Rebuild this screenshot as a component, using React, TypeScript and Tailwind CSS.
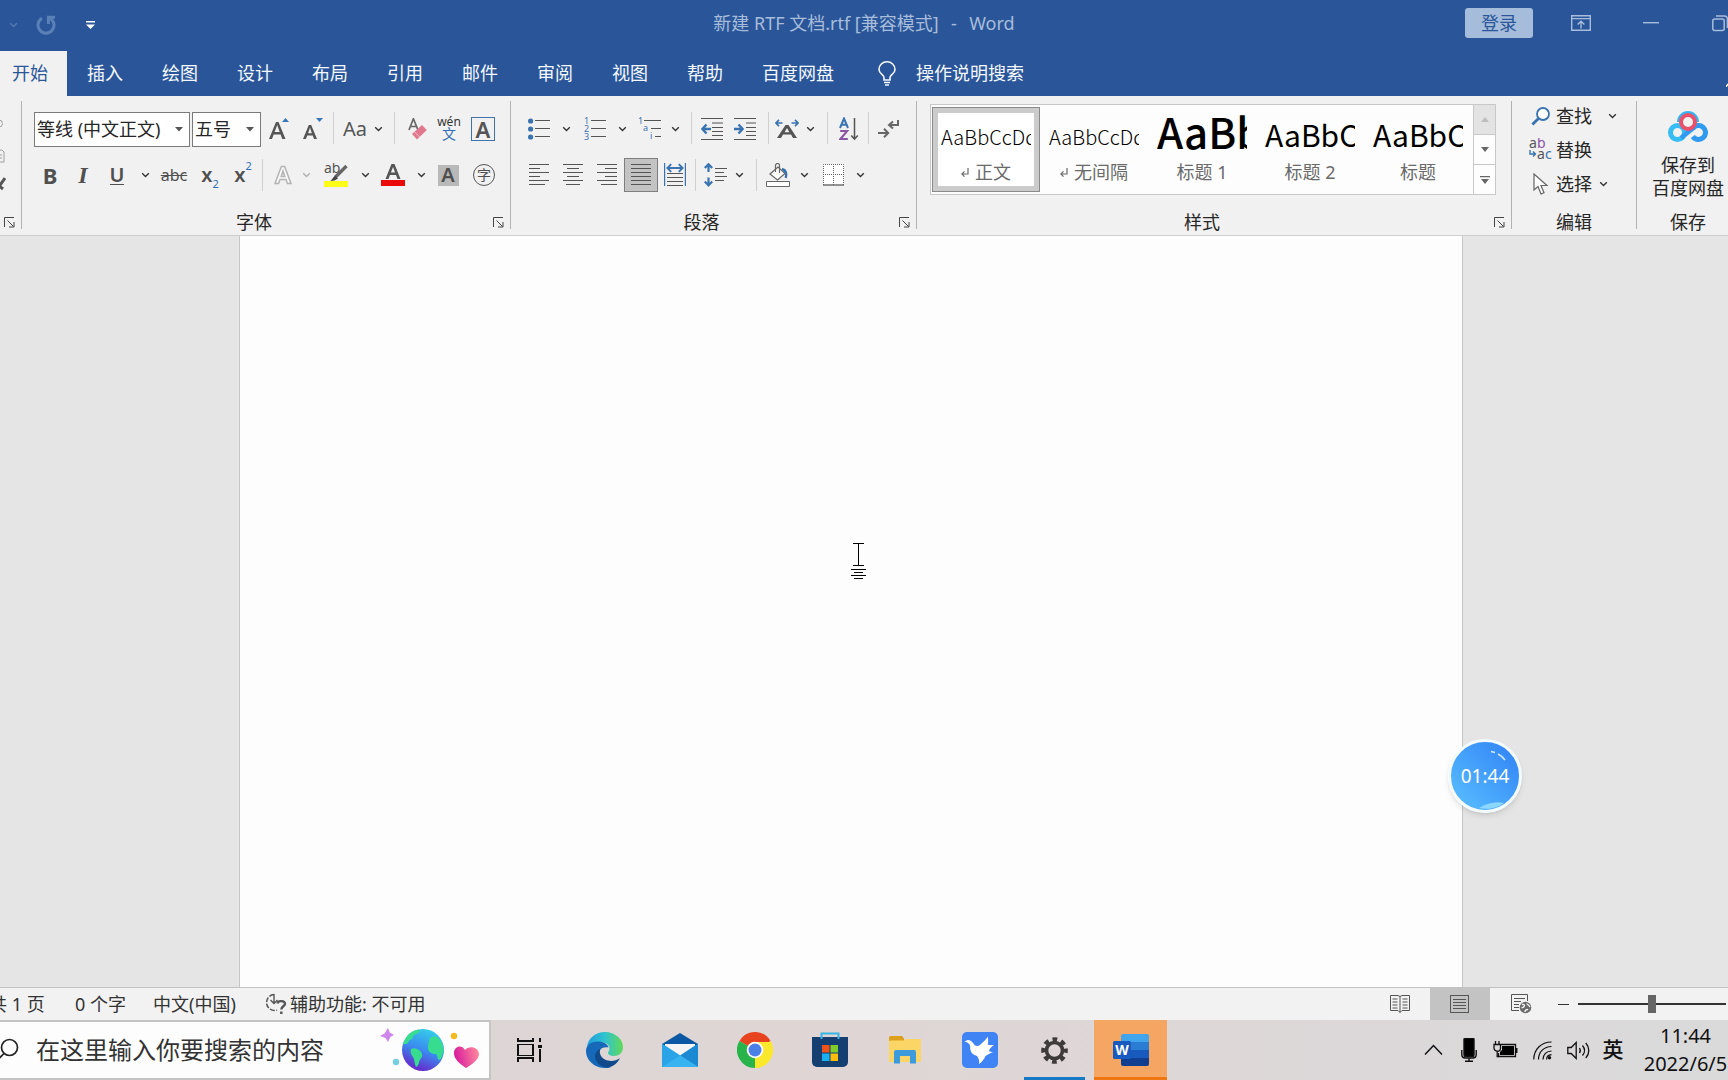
import { useState } from "react";
import type { ReactNode } from "react";

const tabs = ["插入", "绘图", "设计", "布局", "引用", "邮件", "审阅", "视图", "帮助", "百度网盘"];

const styles = [
  { name: "正文", sample: "AaBbCcDd", mark: true, look: "text-[20px] font-light" },
  { name: "无间隔", sample: "AaBbCcDd", mark: true, look: "text-[20px] font-light" },
  { name: "标题 1", sample: "AaBb", mark: false, look: "pb-3 text-[42px] font-medium" },
  { name: "标题 2", sample: "AaBbC", mark: false, look: "pb-1 text-[30px]" },
  { name: "标题", sample: "AaBbC", mark: false, look: "pb-1 text-[30px]" },
];

/* ---------- small parts ---------- */

function Chevron({ className = "text-[#333]" }: { className?: string }) {
  return (
    <svg width="9" height="6" viewBox="0 0 9 6" fill="none" stroke="currentColor" strokeWidth="1.4" className={className}>
      <path d="M1.2 1.2 4.5 4.4 7.8 1.2" />
    </svg>
  );
}

function Btn({ w, label, children, className = "" }: { w: string; label: string; children: ReactNode; className?: string }) {
  return (
    <button aria-label={label} title={label} className={`flex h-[34px] shrink-0 items-center justify-center ${w} ${className}`}>
      {children}
    </button>
  );
}

function Sep({ w }: { w: string }) {
  return (
    <span className={`flex h-8 shrink-0 justify-center ${w}`}>
      <span className="w-px bg-[#d0d0d0]" />
    </span>
  );
}

function Launcher({ label }: { label: string }) {
  return (
    <button aria-label={label} className="flex w-6 shrink-0 items-center justify-center">
      <svg width="11" height="11" viewBox="0 0 11 11" fill="none" stroke="#444">
        <path d="M.5 10V.5H10M3.5 3.5l6 6M10 5v5H5" />
      </svg>
    </button>
  );
}

function Group({ w, title, launcher, children }: { w: string; title: string; launcher?: boolean; children: ReactNode }) {
  return (
    <section className={`flex shrink-0 flex-col ${w}`}>
      <div className="flex-1">{children}</div>
      <div className="flex h-[26px] items-center">
        <span className="flex-1 text-center leading-6">{title}</span>
        {launcher && <Launcher label={`${title}设置`} />}
      </div>
    </section>
  );
}

function Divider() {
  return <div className="mt-[5px] mb-[6px] w-px shrink-0 bg-[#b3b3b3]" />;
}

function Combo({ w, label, value }: { w: string; label: string; value: string }) {
  return (
    <div className={`flex h-[35px] shrink-0 items-center border border-[#7a7a7a] bg-white pr-[6px] ${w}`}>
      <select aria-label={label} className="min-w-0 flex-1 appearance-none bg-transparent pl-[2px] text-[#262626] outline-none">
        <option>{value}</option>
      </select>
      <svg width="8" height="5" viewBox="0 0 8 5" fill="#555">
        <path d="M0 0h8L4 4.6z" />
      </svg>
    </div>
  );
}

function Lines({ rows }: { rows: number[][] }) {
  return (
    <svg width="22" height="22" viewBox="0 0 22 22" stroke="#555" shapeRendering="crispEdges">
      {rows.map(([a, b], i) => (
        <path key={i} d={`M${a} ${i * 4 + 0.5}H${b}`} />
      ))}
    </svg>
  );
}

/* ---------- title bar and tabs ---------- */

function TitleBar() {
  return (
    <header className="grid h-[51px] shrink-0 grid-cols-[1fr_auto_1fr] text-[#a7bddb]">
      <div className="flex h-[50px] items-center pl-[9px]">
        <Chevron className="text-[#5479b3]" />
        <button aria-label="重复" className="ml-[18px]">
          <svg width="20" height="20" viewBox="0 0 20 20" fill="none" stroke="#5a80b8" strokeWidth="3">
            <path d="M6 3.2A8 8 0 1 0 14 3.2" />
            <path d="M12.400 9V2.200H19" />
          </svg>
        </button>
        <button aria-label="自定义快速访问工具栏" className="ml-[30px]">
          <svg width="9" height="8" viewBox="0 0 9 8" fill="#fff">
            <path d="M0 0h9v1.600H0zM0 3.400h9L4.500 8z" />
          </svg>
        </button>
      </div>
      <h1 className="self-start pt-[11px] leading-6 whitespace-pre">
        新建 RTF 文档.rtf [兼容模式]  <span className="px-[3px]">-</span>  Word
      </h1>
      <div className="flex h-[46px] items-center justify-end">
        <button className="h-[30px] w-[68px] rounded-[3px] bg-[#a5bcda] text-[#2b579a]">登录</button>
        <button aria-label="功能区显示选项" className="ml-[38px]">
          <svg width="20" height="16" viewBox="0 0 20 16" fill="none" stroke="currentColor" strokeWidth="1.4">
            <path d="M.7.7h18.600v14.600H.7zM.7 3.600h18.600M10 13.600V6.400M6.600 9.600 10 6.200l3.400 3.400" />
          </svg>
        </button>
        <button aria-label="最小化" className="ml-[52px]">
          <svg width="16" height="4" viewBox="0 0 16 4" fill="currentColor">
            <path d="M0 1h16v1.400H0z" />
          </svg>
        </button>
        <button aria-label="还原" className="ml-[53px]">
          <svg width="16" height="17" viewBox="0 0 16 17" fill="none" stroke="currentColor" strokeWidth="1.5">
            <rect x=".8" y="4" width="11.400" height="11.600" rx="2" />
            <path d="M4 1h8.400a3 3 0 0 1 3 3v9" />
          </svg>
        </button>
      </div>
    </header>
  );
}

function TabBar() {
  return (
    <nav className="flex h-[45px] shrink-0 items-stretch gap-px text-[#f4f8ff]">
      <button className="bg-[#f1f1f1] pr-[19px] pl-3 text-[#2b579a]">开始</button>
      {tabs.map((t) => (
        <button key={t} className="shrink-0 px-[19px]">
          {t}
        </button>
      ))}
      <button className="ml-6 flex shrink-0 items-center gap-5">
        <svg width="18" height="25" viewBox="0 0 18 25" fill="none" stroke="currentColor" strokeWidth="1.6">
          <path d="M6 19v-2.500C6 13.500 1 13 1 8.400a8 7.600 0 0 1 16 0C17 13 12 13.500 12 16.500V19zM6 21.500h6M7 24h4" />
        </svg>
        操作说明搜索
      </button>
      <button aria-label="折叠功能区" className="ml-auto flex items-end pb-[9px]">
        <svg width="2" height="4" viewBox="0 0 2 4" stroke="#fff" strokeWidth="1.4">
          <path d="M0 4 2 1" />
        </svg>
      </button>
    </nav>
  );
}

/* ---------- ribbon ---------- */

function ClipboardStub() {
  return (
    <div className="flex w-[21px] shrink-0 flex-col">
      <svg width="6" height="90" viewBox="0 0 6 90" fill="none" stroke="#a0a0a0" className="mt-4">
        <circle cx="-1" cy="11.500" r="3.500" />
        <path d="M0 38h2l2 2v10H0M0 43h2M0 46h2" />
        <path d="M-2 76 5 66M-2 73l5 4" stroke="#555" strokeWidth="3" />
      </svg>
      <div className="mt-auto flex h-[26px] justify-end">
        <Launcher label="剪贴板设置" />
      </div>
    </div>
  );
}

function FontGroup() {
  return (
    <Group w="w-[488px]" title="字体" launcher>
      <div className="mt-4 flex h-[35px] items-start pl-3 text-[#555]">
        <Combo w="w-[156px]" label="字体" value="等线 (中文正文)" />
        <span className="w-[2px] shrink-0" />
        <Combo w="w-[69px]" label="字号" value="五号" />
        <Btn w="w-9" label="增大字号">
          <svg width="20" height="22" viewBox="0 0 20 22">
            <path d="M0 21 7 4h2.500l7 17h-3.200l-1.700-4.500H4.700L3 21zM5.600 14h5.100L8.200 7z" fill="#555" />
            <path d="M13 4h7l-3.500-4z" fill="#3a77b8" />
          </svg>
        </Btn>
        <Btn w="w-8" label="减小字号">
          <svg width="20" height="22" viewBox="0 0 20 22">
            <path d="M0 21 5.800 7h2.400L14 21h-2.900l-1.400-3.600H4.300L2.900 21zM5.100 15.200h3.800L7 9.800z" fill="#555" />
            <path d="M13 0h7l-3.500 4z" fill="#3a77b8" />
          </svg>
        </Btn>
        <Sep w="w-[9px]" />
        <Btn w="w-[34px]" label="更改大小写" className="text-[20px]">Aa</Btn>
        <Btn w="w-3" label="大小写选项"><Chevron /></Btn>
        <Sep w="w-5" />
        <Btn w="w-7" label="清除所有格式">
          <svg width="20" height="22" viewBox="0 0 20 22">
            <path d="M1 12 5.400.800 10 12M2.400 8.500h6" fill="none" stroke="#666" strokeWidth="1.700" />
            <path d="M4 16 14 7l4.800 5L9 21.500z" fill="#e0798e" />
            <path d="m6.500 13.700 5 5.300" stroke="#f4c3cd" strokeWidth="1" />
          </svg>
        </Btn>
        <Btn w="w-[34px]" label="拼音指南">
          <span className="flex flex-col items-center">
            <span className="text-[12px] leading-[10px] text-[#333]">wén</span>
            <span className="text-[14px] leading-[14px] text-[#2f6fb5]">文</span>
          </span>
        </Btn>
        <Btn w="w-[34px]" label="字符边框">
          <span className="flex size-6 items-center justify-center border border-[#3f74a8] text-[22px] leading-5 font-semibold">A</span>
        </Btn>
      </div>
      <div className="mt-[11px] flex h-[34px] items-center pl-3 text-[#505050]">
        <Btn w="w-8" label="加粗" className="text-[22px] font-bold">B</Btn>
        <Btn w="w-[34px]" label="倾斜" className="font-['Liberation_Serif',serif] text-[24px] font-bold italic">I</Btn>
        <Btn w="w-[34px]" label="下划线">
          <span className="border-b border-[#505050] text-[20px] leading-[18px] font-semibold">U</span>
        </Btn>
        <Btn w="w-[22px]" label="下划线选项"><Chevron /></Btn>
        <Btn w="w-9" label="删除线" className="text-[16px] line-through">abc</Btn>
        <Btn w="w-9" label="下标">
          <span className="text-[20px] leading-6 font-semibold">x</span>
          <span className="self-end text-[11px] leading-4 text-[#2f6fb5]">2</span>
        </Btn>
        <Btn w="w-[30px]" label="上标">
          <span className="text-[20px] leading-6 font-semibold">x</span>
          <span className="self-start text-[11px] leading-4 text-[#2f6fb5]">2</span>
        </Btn>
        <Sep w="w-2" />
        <Btn w="w-[34px]" label="文本效果">
          <svg width="18" height="20" viewBox="0 0 18 20" fill="#fafafa" stroke="#b4b4b4" strokeWidth="1.500">
            <path d="M1 18.500 7.400 1.500h3.200L17 18.500h-3.600L12 14.600H6L4.600 18.500zM7.200 11.500h3.600L9 6z" />
          </svg>
        </Btn>
        <Btn w="w-3" label="文本效果选项"><Chevron className="text-[#b0b0b0]" /></Btn>
        <Btn w="w-12" label="突出显示">
          <svg width="24" height="25" viewBox="0 0 24 25">
            <text x="0" y="10" fontSize="14" fill="#555">ab</text>
            <path d="m22.500 3-11 11" stroke="#666" strokeWidth="3.400" />
            <path d="m11 12.500 3 3-3.500 2-4 .5z" fill="#444" />
            <path d="M0 18h24v6H0z" fill="#ffff1a" />
          </svg>
        </Btn>
        <Btn w="w-[10px]" label="突出显示颜色"><Chevron /></Btn>
        <Btn w="w-[46px]" label="字体颜色">
          <svg width="24" height="24" viewBox="0 0 24 24">
            <path d="M4.500 16 10.500 1h3l6 15h-3l-1.500-4H9l-1.500 4zM9.900 9.600h4.200L12 4z" fill="#555" />
            <path d="M0 17h24v6H0z" fill="#ea0a0a" />
          </svg>
        </Btn>
        <Btn w="w-[10px]" label="字体颜色选项"><Chevron /></Btn>
        <Btn w="w-11" label="字符底纹">
          <span className="flex size-[21px] items-center justify-center bg-[#b9b9b9] text-[20px] leading-5 font-semibold">A</span>
        </Btn>
        <Btn w="w-7" label="带圈字符">
          <span className="flex size-[22px] items-center justify-center rounded-full border border-[#555] text-[14px] leading-4">字</span>
        </Btn>
      </div>
    </Group>
  );
}

function ParagraphGroup() {
  return (
    <Group w="w-[405px]" title="段落" launcher>
      <div className="mt-4 flex h-[35px] items-start pl-[11px] text-[#555]">
        <Btn w="w-[34px]" label="项目符号">
          <svg width="22" height="22" viewBox="0 0 22 22">
            <g fill="#3a73b0">
              <circle cx="2.600" cy="3" r="2.600" />
              <circle cx="2.600" cy="11" r="2.600" />
              <circle cx="2.600" cy="19" r="2.600" />
            </g>
            <path d="M7 2.500h15M7 10.500h15M7 18.500h15" stroke="#555" />
          </svg>
        </Btn>
        <Btn w="w-5" label="项目符号库"><Chevron /></Btn>
        <Btn w="w-[38px]" label="编号">
          <svg width="22" height="24" viewBox="0 0 22 24">
            <g fill="#3a73b0" fontSize="9">
              <text x="0" y="7">1</text>
              <text x="0" y="15">2</text>
              <text x="0" y="23">3</text>
            </g>
            <path d="M7 3.500h15M7 11.500h15M7 19.500h15" stroke="#555" />
          </svg>
        </Btn>
        <Btn w="w-4" label="编号库"><Chevron /></Btn>
        <Btn w="w-[38px]" label="多级列表">
          <svg width="23" height="24" viewBox="0 0 23 24">
            <g fill="#3a73b0" fontSize="9">
              <text x="0" y="7">1</text>
              <text x="5" y="14">a</text>
              <text x="12" y="22">i</text>
            </g>
            <path d="M6 3.500h17M13 11.500h10M17 19.500h6" stroke="#555" />
          </svg>
        </Btn>
        <Btn w="w-[14px]" label="多级列表库"><Chevron /></Btn>
        <Sep w="w-[18px]" />
        <Btn w="w-6" label="减少缩进量">
          <svg width="23" height="22" viewBox="0 0 23 22" fill="none">
            <path d="M0 .5h22M11 5h11M11 9.500h11M11 13.500h11M11 17.500h11M0 21.500h22" stroke="#555" />
            <path d="M10 11H2M5.500 6.500 1.400 11l4.100 4.500" stroke="#3a73b0" strokeWidth="2.400" />
          </svg>
        </Btn>
        <Btn w="w-[42px]" label="增加缩进量">
          <svg width="23" height="22" viewBox="0 0 23 22" fill="none">
            <path d="M0 .5h22M12 5h10M12 9.500h10M12 13.500h10M12 17.500h10M0 21.500h22" stroke="#555" />
            <path d="M0 11h8M4.500 6.500 8.600 11l-4.100 4.500" stroke="#3a73b0" strokeWidth="2.400" />
          </svg>
        </Btn>
        <Sep w="w-1" />
        <Btn w="w-[34px]" label="中文版式">
          <svg width="24" height="20" viewBox="0 0 24 20" fill="none">
            <path d="M7.500 4H1M4 .8.900 4 4 7.200M16.500 4H23M20 .8 23.100 4 20 7.200" stroke="#3a73b0" strokeWidth="1.700" />
            <path d="M2 19 10.500 6h3L22 19h-4l-2-3.400H8L6 19zM9.600 13.200h4.800L12 9z" fill="#555" />
          </svg>
        </Btn>
        <Btn w="w-3" label="中文版式选项"><Chevron /></Btn>
        <Sep w="w-[22px]" />
        <Btn w="w-[22px]" label="排序">
          <svg width="20" height="24" viewBox="0 0 20 24" fill="none">
            <path d="M1 11 5 1.500 9 11M2.400 7.800h5.200" stroke="#3a73b0" strokeWidth="2" />
            <path d="M1.200 14h7L1.400 22h7.400" stroke="#8a55a5" strokeWidth="2" />
            <path d="M15.500 1v21M12.200 18.500l3.300 3.600 3.300-3.600" stroke="#555" strokeWidth="1.500" />
          </svg>
        </Btn>
        <Sep w="w-4" />
        <Btn w="w-6" label="显示编辑标记">
          <svg width="21" height="20" viewBox="0 0 21 20" fill="none" stroke="#666" strokeWidth="2">
            <path d="M20 1v5h-8M15 2.500 11 6l4 3.500M0 14h10M6 9.700l4.200 4.300L6 18.300" />
          </svg>
        </Btn>
      </div>
      <div className="mt-[11px] flex h-[34px] items-center pl-[11px]">
        <Btn w="w-[34px]" label="左对齐"><Lines rows={[[1, 21], [1, 12], [1, 21], [1, 12], [1, 21], [1, 17]]} /></Btn>
        <Btn w="w-[34px]" label="居中"><Lines rows={[[1, 21], [5, 17], [1, 21], [5, 17], [1, 21], [4, 18]]} /></Btn>
        <Btn w="w-[34px]" label="右对齐"><Lines rows={[[1, 21], [9, 21], [1, 21], [9, 21], [1, 21], [5, 21]]} /></Btn>
        <Btn w="w-[34px]" label="两端对齐" className="border border-[#7f7f7f] bg-[#c3c3c3]">
          <Lines rows={[[1, 21], [1, 21], [1, 21], [1, 21], [1, 21], [1, 21]]} />
        </Btn>
        <Btn w="w-[34px]" label="分散对齐">
          <svg width="22" height="24" viewBox="0 0 22 24" fill="none">
            <path d="M.6 0v23M21.400 0v23" stroke="#3a73b0" strokeWidth="1.200" />
            <path d="M3.500 5h15M7.200 1.200 3.400 5l3.800 3.800M14.800 1.200 18.600 5l-3.800 3.800" stroke="#3a73b0" strokeWidth="1.900" />
            <path d="M3 10.500h16M3 14.500h16M3 18.500h16M3 22.500h16" stroke="#555" />
          </svg>
        </Btn>
        <Sep w="w-[6px]" />
        <Btn w="w-[34px]" label="行距">
          <svg width="23" height="24" viewBox="0 0 23 24" fill="none">
            <path d="M4.500 1.500V9M.8 5l3.700-3.800L8.200 5M4.500 14.500V22M.8 18.600l3.700 3.800 3.700-3.800" stroke="#3a73b0" strokeWidth="2.200" />
            <path d="M11 5.500h12M11 9.500h9M11 13.500h12M11 17.500h9" stroke="#555" />
          </svg>
        </Btn>
        <Btn w="w-[14px]" label="行距选项"><Chevron /></Btn>
        <Sep w="w-5" />
        <Btn w="w-6" label="底纹">
          <svg width="24" height="25" viewBox="0 0 24 25" fill="none" stroke="#666">
            <path d="M4 11 12 4l7 6.500-7.500 6.500z" fill="#fff" strokeWidth="1.200" />
            <path d="M9.500 9V2.500a2 2 0 0 1 4 0V10" strokeWidth="1.200" />
            <path d="M16 6c4 1 5 4 3.800 9" stroke="#3a73b0" strokeWidth="2.400" />
            <path d="M.5 18.500h23v5H.5z" fill="#fff" />
          </svg>
        </Btn>
        <Btn w="w-7" label="底纹颜色"><Chevron /></Btn>
        <Btn w="w-[30px]" label="边框">
          <svg width="21" height="22" viewBox="0 0 21 22" fill="#fff" stroke="#666">
            <path d="M.5 21V.5h20V21M10.500 0v21M0 10.500h21" strokeDasharray="1 1" />
            <path d="M0 21h21" strokeWidth="1.400" />
          </svg>
        </Btn>
        <Btn w="w-6" label="边框选项"><Chevron /></Btn>
      </div>
    </Group>
  );
}

function StylesGroup() {
  const [current, setCurrent] = useState("正文");
  return (
    <Group w="w-[594px]" title="样式" launcher>
      <div className="mt-2 ml-[13px] flex h-[91px] w-[566px] border border-[#c8c8c8] bg-[#fdfdfd]">
        <div className="flex flex-1 py-[2px] pl-px">
          {styles.map((s) => (
            <button
              key={s.name}
              onClick={() => setCurrent(s.name)}
              className={`flex w-[108px] flex-col border ${current === s.name ? "border-[#8a8a8a] bg-[#cbcbcb]" : "border-transparent"} p-[5px]`}
            >
              <span className={`flex w-full flex-1 flex-col px-[3px] ${current === s.name ? "bg-white" : ""}`}>
                <span
                  className={`flex h-[47px] w-full items-center overflow-hidden font-['Noto_Sans_CJK_SC',sans-serif] whitespace-nowrap text-black ${s.look}`}
                >
                  {s.sample}
                </span>
                <span className="flex items-center justify-center gap-[6px] leading-6 text-[#6a6a6a]">
                  {s.mark && (
                    <svg width="8" height="9" viewBox="0 0 8 9" fill="none" stroke="#6a6a6a" strokeWidth="1.200">
                      <path d="M7 0v6H1M3.500 3.400.9 6l2.600 2.600" />
                    </svg>
                  )}
                  {s.name}
                </span>
              </span>
            </button>
          ))}
        </div>
        <div className="flex w-[22px] flex-col divide-y divide-[#c8c8c8] border-l border-[#c8c8c8]">
          <button aria-label="上一行" className="flex flex-1 items-center justify-center bg-[#e3e3e3]">
            <svg width="8" height="5" viewBox="0 0 8 5" fill="#bdbdbd"><path d="M0 5h8L4 0z" /></svg>
          </button>
          <button aria-label="下一行" className="flex flex-1 items-center justify-center">
            <svg width="8" height="5" viewBox="0 0 8 5" fill="#666"><path d="M0 0h8L4 5z" /></svg>
          </button>
          <button aria-label="其他样式" className="flex flex-1 items-center justify-center">
            <svg width="10" height="8" viewBox="0 0 10 8" fill="#666"><path d="M0 0h10v1.200H0zM1 3h8L5 8z" /></svg>
          </button>
        </div>
      </div>
    </Group>
  );
}

function EditGroup() {
  return (
    <Group w="w-[124px]" title="编辑">
      <div className="flex flex-col pt-[3px] pl-4 text-[#262626]">
        <button className="flex h-[34px] items-center">
          <span className="flex w-7 pl-[3px]">
            <svg width="19" height="19" viewBox="0 0 19 19" fill="none" stroke="#3a73b0">
              <circle cx="12" cy="7" r="6" strokeWidth="1.800" fill="#fff" />
              <path d="M7.500 11.500 1.400 17.600" strokeWidth="2.800" />
            </svg>
          </span>
          查找
          <span className="flex w-10 justify-center"><Chevron /></span>
        </button>
        <button className="flex h-[34px] items-center">
          <span className="flex w-7">
            <svg width="26" height="24" viewBox="0 0 26 24" fontSize="14">
              <text x="1" y="10" fill="#555">a</text>
              <text x="9" y="10" fill="#8a55a5">b</text>
              <text x="9" y="21" fill="#555">a</text>
              <text x="17" y="21" fill="#3a73b0">c</text>
              <path d="M2 12v4h5M5 13.500 7.500 16 5 18.500" fill="none" stroke="#3a73b0" strokeWidth="1.400" />
            </svg>
          </span>
          替换
        </button>
        <button className="flex h-[34px] items-center">
          <span className="flex w-7 pl-[5px]">
            <svg width="15" height="22" viewBox="0 0 15 22" fill="#fdfdfd" stroke="#666" strokeWidth="1.200">
              <path d="M1 1v16l4-3.500 3 7.500 3-1.300L8 12.500h6z" />
            </svg>
          </span>
          选择
          <span className="flex w-[22px] justify-center"><Chevron /></span>
        </button>
      </div>
    </Group>
  );
}

function SaveGroup() {
  return (
    <Group w="w-[102px]" title="保存">
      <button className="flex w-full flex-col items-center pt-[14px] leading-[23px] text-[#262626]">
        <svg width="40" height="34" viewBox="0 0 40 34" fill="none">
          <path d="M11.500 12a8.500 8.500 0 0 1 17 0" stroke="#35b6ee" strokeWidth="5" />
          <circle cx="9.500" cy="22.500" r="7" stroke="#36bdf3" strokeWidth="5" />
          <path d="M24.800 18.500a7 7 0 1 1 0 8" stroke="#2f9af0" strokeWidth="5" />
          <path d="M13 28 26 17.500" stroke="#2f9af0" strokeWidth="4.500" />
          <circle cx="20" cy="12" r="7" stroke="#ea4f6b" strokeWidth="4" />
        </svg>
        <span className="pt-[10px]">保存到</span>
        <span>百度网盘</span>
      </button>
    </Group>
  );
}

/* ---------- status bar ---------- */

function StatusBar() {
  return (
    <footer className="flex h-[33px] shrink-0 items-center border-t border-[#c2c2c2] bg-[#f2f2f2] leading-6 whitespace-pre text-[#333]">
      <span className="-ml-[11px] w-[86px]">共 1 页</span>
      <span className="w-[78px]">0 个字</span>
      <span className="w-[112px]">中文(中国)</span>
      <button className="flex items-center gap-[3px]">
        <svg width="22" height="22" viewBox="0 0 22 22" fill="none" stroke="#555">
          <path d="M9 1.500a8 8 0 1 0 3 15.600" strokeWidth="1.500" strokeDasharray="5 1.500" />
          <path d="M9 1v9M5.500 7 9 10.500 12.500 7" strokeWidth="1.400" />
          <path d="M12.500 10.500c.5-3.500 8-3 7.500.500-.4 2.300-3.700 2.500-3.700 5.500M16.300 18.500v2.600" strokeWidth="2.400" />
        </svg>
        辅助功能: 不可用
      </button>
      <div className="ml-auto flex h-full items-center">
        <button aria-label="阅读视图" className="flex h-full w-[60px] items-center justify-center">
          <svg width="20" height="20" viewBox="0 0 20 20" fill="none" stroke="#555">
            <path d="M.5 1.500h7.500l2 1 2-1h7.500v15H12l-2 2-2-2H.500zM10 2.500v16" />
            <path d="M2.500 5h5M2.500 8h5M2.500 11h5M2.500 14h5M12.500 5h5M12.500 8h5M12.500 11h5M12.500 14h5" />
          </svg>
        </button>
        <button aria-label="页面视图" className="flex h-full w-[60px] items-center justify-center bg-[#c3c3c3]">
          <svg width="20" height="18" viewBox="0 0 20 18" fill="none" stroke="#555" shapeRendering="crispEdges">
            <path d="M.5.500h18v17H.500zM3 4.500h13M3 7.500h13M3 10.500h13M3 13.500h13" />
          </svg>
        </button>
        <button aria-label="Web 版式视图" className="flex h-full w-[62px] items-center justify-center">
          <svg width="21" height="20" viewBox="0 0 21 20" fill="none" stroke="#555">
            <path d="M8 16.500H.5V.5h16V7M3 4.500h11M3 7.500h7M3 10.500h5M3 13.500h5" />
            <circle cx="14.500" cy="13.500" r="5.800" fill="#6b6b6b" stroke="none" />
            <path d="M11 10.500c2-.5 3 .5 2 2s-1 1.500-2.500 1M16 9.500c0 1 2 1.500 3 3.500M14 18c0-2 2-3 3-2" stroke="#f2f2f2" strokeWidth="1.400" />
          </svg>
        </button>
        <button aria-label="缩小" className="flex w-[22px] justify-center">
          <span className="h-px w-[11px] bg-[#333]" />
        </button>
        <input
          type="range"
          aria-label="显示比例"
          defaultValue={50}
          className="mr-[2px] ml-1 h-[18px] w-[148px] appearance-none bg-transparent [&::-webkit-slider-runnable-track]:h-[2px] [&::-webkit-slider-runnable-track]:bg-[#333] [&::-webkit-slider-thumb]:-mt-2 [&::-webkit-slider-thumb]:h-[18px] [&::-webkit-slider-thumb]:w-2 [&::-webkit-slider-thumb]:appearance-none [&::-webkit-slider-thumb]:bg-[#666]"
        />
      </div>
    </footer>
  );
}

/* ---------- windows taskbar ---------- */

function TaskIcon({ label, children }: { label: string; children: ReactNode }) {
  return (
    <button aria-label={label} title={label} className="flex w-[75px] shrink-0 items-center justify-center">
      {children}
    </button>
  );
}

function SearchBox() {
  return (
    <label className="flex w-[491px] shrink-0 items-center border-y-2 border-r-2 border-[#c4c4c4] bg-[#fdfdfd]">
      <svg width="20" height="24" viewBox="0 0 20 24" fill="none" stroke="#222" strokeWidth="1.700">
        <circle cx="9.500" cy="9.500" r="8" />
        <path d="m4 15.500-6 6" />
      </svg>
      <input
        aria-label="搜索"
        placeholder="在这里输入你要搜索的内容"
        className="ml-4 min-w-0 flex-1 bg-transparent text-[24px] outline-none placeholder:text-[#333]"
      />
      <svg width="100" height="46" viewBox="0 0 100 46" className="mr-[9px]">
        <defs>
          <linearGradient id="sea" x1=".7" y1="0" x2=".3" y2="1">
            <stop offset="0" stopColor="#35d0e8" />
            <stop offset=".5" stopColor="#3a8cf0" />
            <stop offset="1" stopColor="#6a1fc8" />
          </linearGradient>
          <linearGradient id="heart" x1="0" y1=".5" x2="1" y2=".3">
            <stop offset="0" stopColor="#d6189c" />
            <stop offset="1" stopColor="#ff8a9c" />
          </linearGradient>
        </defs>
        <path d="M8 1l1.800 4.500L14 8l-3.500 1.800L8 15l-2.500-4L0 9l4.500-2.500z" fill="#cf86ea" />
        <circle cx="16" cy="35" r="3.200" fill="#73cfe0" />
        <circle cx="74" cy="9" r="3.200" fill="#f5b921" />
        <circle cx="43" cy="23" r="21" fill="url(#sea)" />
        <path d="M23 17C26 8 32 3 39 2.500c2 2-1 4-4 5s-1 4-4 5-2 4-5 4.500zM31 22c4-2 10 1 11 5s-3 5-3 9c-1 2-1 3-3 4-2-4-1-7-3-10s-3-5-2-8zM50 11c4-3 8-1 10 2 3 4 4 9 3.500 12-2 3-1 7-4.500 8-2-1-1-4-3-6-4 0-8-2-8-6s1-7 2-10z" fill="#37dc8e" />
        <path d="M86 41C79 36 74 32 74 26c0-7 8-9 11-3 4-5 14-3 14 4 0 5-5 9-13 14z" fill="url(#heart)" />
      </svg>
    </label>
  );
}

function Taskbar() {
  return (
    <div className="flex h-[60px] shrink-0 items-stretch bg-gradient-to-r from-[#dbd6d5] via-[#dfd5d5] to-[#dadadb] text-[#111]">
      <SearchBox />
      <div className="flex pl-px">
        <TaskIcon label="任务视图">
          <svg width="26" height="24" viewBox="0 0 26 24" fill="none" stroke="#111" strokeWidth="1.500" shapeRendering="crispEdges">
            <path d="M1 0v3h15V0M1 6.500h15v11H1zM1 24v-4h15v4M23 0v4M23 11v13" />
            <path d="M21 7h4v3h-4z" fill="#111" stroke="none" />
          </svg>
        </TaskIcon>
        <TaskIcon label="Edge">
          <svg width="37" height="36" viewBox="0 0 37 36">
            <defs>
              <linearGradient id="eg" x1="0" y1=".5" x2="1" y2=".5">
                <stop offset="0" stopColor="#1f9bdc" />
                <stop offset=".5" stopColor="#30c3cf" />
                <stop offset="1" stopColor="#62d957" />
              </linearGradient>
            </defs>
            <path d="M1 15C2 6 10 0 19 0c10 0 18 7 18 15 0 6-4 9-9 9-4 0-6-1.500-6-3s1.500-2 1.500-4.500c0-4-4-6-8-6C9 10.500 3 13 1 15z" fill="url(#eg)" />
            <path d="M0 19c0-7 7-10 13-9.500 5 .4 9 3 9.500 6C15 14 12 19 13 24c1 6 6 10 12 11-3 1.500-10 1.500-15-1S0 26 0 19z" fill="#1668b8" />
            <path d="M14.500 17C13 20 14 25 19 27.500s11 1.500 15-1.500c-3 6-8 9.500-13 9.500-7-.5-12-6-12-11 0-4 2.500-6.500 5.500-7.500z" fill="#114a8b" />
          </svg>
        </TaskIcon>
        <TaskIcon label="邮件">
          <svg width="36" height="34" viewBox="0 0 36 34">
            <path d="M0 11 18 0l18 11v6H0z" fill="#0c58a4" />
            <path d="M3 11h30v12H3z" fill="#f5f5f5" />
            <path d="M0 10.500 36 34H0z" fill="#2aa4e6" />
            <path d="M36 10.500 18 22.500 36 34z" fill="#1c8ad2" />
            <path d="M18 22.500 0 34h36z" fill="#36b3f0" />
          </svg>
        </TaskIcon>
        <TaskIcon label="Chrome">
          <svg width="36" height="36" viewBox="0 0 36 36">
            <path d="M18 18 2.400 9A18 18 0 0 1 33.600 9z" fill="#e8431f" />
            <path d="M18 18 33.600 9A18 18 0 0 1 18 36z" fill="#fbe72c" />
            <path d="M18 18v18A18 18 0 0 1 2.400 9z" fill="#28b44b" />
            <path d="M18 10h15.600A18 18 0 0 1 18 36l7-14z" fill="#fbe72c" />
            <circle cx="18" cy="18" r="8.300" fill="#fff" />
            <circle cx="18" cy="18" r="6.500" fill="#4b7fe8" />
          </svg>
        </TaskIcon>
        <TaskIcon label="Microsoft Store">
          <svg width="36" height="36" viewBox="0 0 36 36">
            <path d="M0 5h36v25a5 5 0 0 1-5 5H5a5 5 0 0 1-5-5z" fill="#153f70" />
            <path d="M9.500 7V1.500h17V7" fill="none" stroke="#38b5e6" strokeWidth="2" />
            <path d="M10 13h7.500v7.500H10z" fill="#f1511b" />
            <path d="M18.500 13H26v7.500h-7.500z" fill="#80cc28" />
            <path d="M10 21.500h7.500V29H10z" fill="#18b0f0" />
            <path d="M18.500 21.500H26V29h-7.500z" fill="#fbbc09" />
          </svg>
        </TaskIcon>
        <TaskIcon label="文件资源管理器">
          <svg width="32" height="28" viewBox="0 0 32 28">
            <path d="M0 1.500A1.500 1.500 0 0 1 1.500 0H13l2 2.500V6H0z" fill="#dda01c" />
            <path d="M2 4.500h13l2-1.500h15v23H0V5z" fill="#fbd565" />
            <path d="M5 16a2 2 0 0 1 2-2h18a2 2 0 0 1 2 2v11.500h-6V20H11v7.500H5z" fill="#3d9bdc" />
          </svg>
        </TaskIcon>
        <TaskIcon label="迅雷">
          <svg width="36" height="36" viewBox="0 0 36 36">
            <rect width="36" height="36" rx="5" fill="#3f83f4" />
            <path d="M2.500 9.500 5.500 8C9 8 10.500 10 13 13.500c2.500 1 4.500.5 6-1.500C22 9 24.500 7.500 25.500 4.500c1 3 .8 5.500.2 8 2.300.8 4.300.3 6.300.5-2.500 1.500-4.300 3.500-5 6 1.200.8 2.500 1 4 1-3 1.200-5.500 2.500-7.500 4-1.500 3.500-3.500 6-6.500 8 .8-3-.4-5.500-2-8C9.500 22.500 8 19 8.200 14.500 8 12 6 10.500 2.500 9.500z" fill="#fff" />
          </svg>
        </TaskIcon>
        <button aria-label="设置" className="flex w-[75px] shrink-0 flex-col items-center">
          <span className="flex flex-1 items-center pt-[3px]">
            <svg width="27" height="27" viewBox="-13.500 -13.500 27 27" fill="none" stroke="#403b3b">
              <circle r="8" strokeWidth="3.600" />
              <circle r="11" strokeWidth="4.600" strokeDasharray="4.600 4.040" strokeDashoffset="2.300" />
            </svg>
          </span>
          <span className="h-[3px] w-[61px] bg-[#1778c4]" />
        </button>
        <button aria-label="Word" className="ml-[2px] flex w-[73px] shrink-0 flex-col bg-[#f6a663]">
          <span className="flex flex-1 items-center justify-center pt-[2px]">
            <svg width="36" height="32" viewBox="0 0 36 32">
              <path d="M8 2a2 2 0 0 1 2-2h24a2 2 0 0 1 2 2v6H8z" fill="#41a5ee" />
              <path d="M8 8h28v8H8z" fill="#2b7cd3" />
              <path d="M8 16h28v8H8z" fill="#185abd" />
              <path d="M8 24h28v6a2 2 0 0 1-2 2H10a2 2 0 0 1-2-2z" fill="#103f91" />
              <rect y="7" width="18" height="18" rx="1.500" fill="#185abd" />
              <text x="9" y="21" fontSize="14" fontWeight="700" fill="#fff" textAnchor="middle">W</text>
            </svg>
          </span>
          <span className="h-[3px] w-full bg-[#ee7712]" />
        </button>
      </div>
      <div className="ml-auto flex shrink-0 items-center">
        <button aria-label="显示隐藏的图标" className="flex w-9 justify-center">
          <svg width="19" height="12" viewBox="0 0 19 12" fill="none" stroke="#111" strokeWidth="1.500">
            <path d="M1 10.500 9.500 1.500l8.500 9" />
          </svg>
        </button>
        <button aria-label="麦克风" className="flex w-9 justify-center">
          <svg width="16" height="24" viewBox="0 0 16 24" fill="none" stroke="#111" strokeWidth="1.400">
            <rect x="3" y="0" width="10" height="18.500" rx="1.500" fill="#000" />
            <path d="M.8 12v4.500c0 2.500 1.500 3.500 3.500 3.500h7.400c2 0 3.500-1 3.500-3.500V12M8 20v3.300M4 23.300h8" />
          </svg>
        </button>
        <button aria-label="电池" className="flex w-9 justify-center">
          <svg width="25" height="18" viewBox="0 0 25 18" fill="none" stroke="#111" strokeWidth="1.300">
            <path d="M8 3.500h14.500v12H5.500V12" />
            <path d="M9 5h12v9H7v-3l2-2z" fill="#000" stroke="none" />
            <path d="M23 7h1.500v5H23z" fill="#111" stroke="none" />
            <path d="M1 3.500h6.500V7a3.200 3.200 0 0 1-6.500 0zM2.500 3.500V0M6 3.500V0M4.200 10v5.500h1.500" />
          </svg>
        </button>
        <button aria-label="网络" className="flex w-[38px] justify-center">
          <svg width="19" height="19" viewBox="0 0 19 19" fill="none" stroke="#111" strokeWidth="1.200">
            <path d="M.8 18.500C.8 8.500 8 1 18.500 1M5.500 18.500C5.500 11 11 5.500 18.500 5.500M10 18.500C10 13.500 13.500 10 18.500 10" />
            <circle cx="16.500" cy="16.800" r="1.700" fill="#111" stroke="none" />
            <path d="M13.600 18.500c0-3 2-4.700 4.900-4.900" />
          </svg>
        </button>
        <button aria-label="音量" className="flex w-[34px] justify-center">
          <svg width="23" height="19" viewBox="0 0 23 19" fill="none" stroke="#111" strokeWidth="1.300">
            <path d="M.8 6.500h3.400l5-5v16l-5-5H.8z" />
            <path d="M12.500 7c1 1.500 1 3.500 0 5M15.500 4.500c2.500 3 2.500 7 0 10M18.800 2c4 4.500 4 10.500 0 15" />
          </svg>
        </button>
        <button className="w-9 text-[21px] font-medium">英</button>
        <div className="ml-3 w-[85px] text-center text-[20px] leading-7 whitespace-nowrap">
          <div>11:44</div>
          <div>2022/6/5</div>
        </div>
      </div>
    </div>
  );
}

export default function App() {
  return (
    <div className="flex h-screen flex-col overflow-hidden bg-[#2a5699] font-['Noto_Sans','Noto_Sans_CJK_SC',sans-serif] text-[18px] text-[#262626]">
      <TitleBar />
      <TabBar />
      <div className="flex h-[140px] shrink-0 overflow-hidden border-b border-[#cfcfcf] bg-[#f1f1f1]">
        <ClipboardStub />
        <Divider />
        <FontGroup />
        <Divider />
        <ParagraphGroup />
        <Divider />
        <StylesGroup />
        <Divider />
        <EditGroup />
        <Divider />
        <SaveGroup />
      </div>

      <main className="relative flex min-h-0 flex-1 bg-[#e5e5e5] pr-[265px] pl-[239px]">
        <div className="flex-1 border-x border-[#c6c6c6] bg-[#fdfdfd]" />
        {/* text cursor */}
        <svg width="16" height="38" viewBox="0 0 16 38" stroke="#000" shapeRendering="crispEdges" className="absolute top-[306px] left-[850px]">
          <path d="M3 1.500h11M8.500 1v22M3 23.500h11M1 27.500h15M4 30.500h9M1 33.500h15M4 36.500h9" />
        </svg>
        {/* recording timer */}
        <div className="absolute right-[206px] bottom-[174px] flex size-[74px] items-center justify-center rounded-full border-[3px] border-[#f4fbff] bg-gradient-to-tr from-[#5cc0ff] to-[#3180f5] text-[19px] text-white shadow-md">
          01:44
          <svg width="68" height="68" viewBox="0 0 68 68" className="absolute inset-0" fill="none">
            <path d="M40 9.500l4 1M47 12c3 1.500 5 3.500 7 6" stroke="#cfe8ff" strokeWidth="1.600" />
            <path d="M28 66c8-5 17-7 25-5-6 5-16 7-25 5z" fill="#8ad8ff" />
          </svg>
        </div>
      </main>

      <StatusBar />
      <Taskbar />
    </div>
  );
}
